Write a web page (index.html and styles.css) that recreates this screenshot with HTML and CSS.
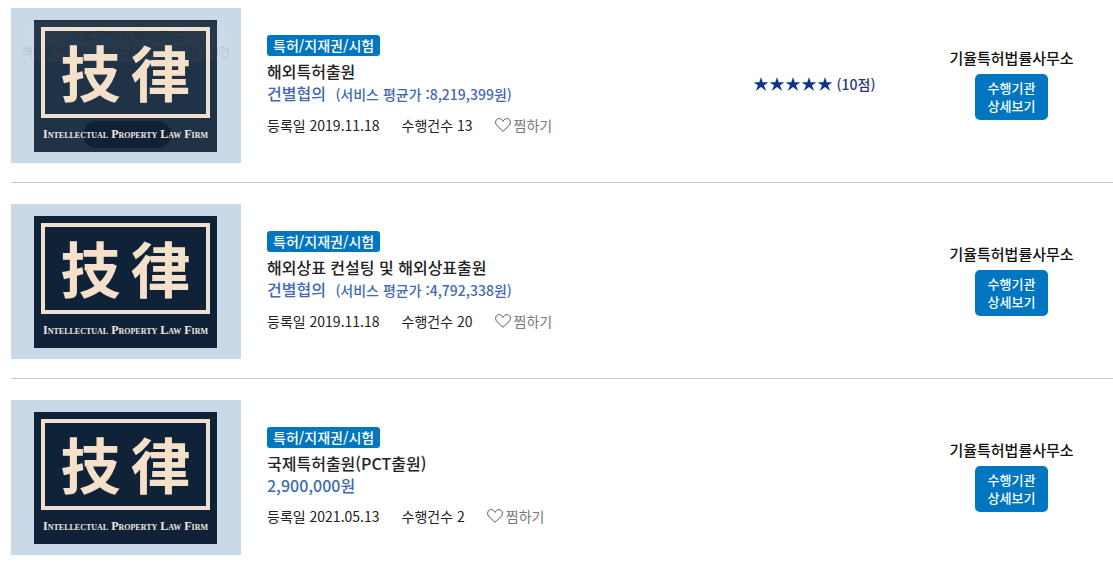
FILE: index.html
```html
<!DOCTYPE html>
<html lang="ko">
<head>
    <meta charset="UTF-8">
    <meta name="viewport" content="width=device-width, initial-scale=1.0">
    <title>특허/지재권/시험 서비스</title>
    <link rel="stylesheet" href="styles.css">
</head>
<body>

    <!-- Shared icons -->
    <svg class="icon-defs" aria-hidden="true">
        <symbol id="star" viewBox="0 0 16 16">
            <path d="M8 1 L9.7 6.2 L15.2 6.2 L11 9.6 L13.2 15 L8 11 L2.8 15 L5 9.6 L0.8 6.2 L6.3 6.2 Z"/>
        </symbol>
        <symbol id="heart" viewBox="0 0 16 14">
            <path d="M8 13.3 L2 7.6 C0.2 5.8 0.1 3 1.8 1.5 C3.8 -0.2 6.8 0.6 8 3.4 C9.2 0.6 12.2 -0.2 14.2 1.5 C15.9 3 15.8 5.8 14 7.6 Z"/>
        </symbol>
    </svg>

    <ul class="service-list">
        <li class="service">
            <div class="thumb">
                <div class="plate plate-hover">
                    <div class="plate-frame"><span>技</span><span>律</span></div>
                    <div class="plate-caption">Intellectual Property Law Firm</div>
                </div>
                <div class="thumb-overlay">
                    <span>기율특허법률사무소</span>
                    <span>해외특허출원 서비스 한번에 이전하기 8건</span>
                </div>
                <div class="thumb-pill"></div>
            </div>
            <div class="info">
                <span class="badge">특허/지재권/시험</span>
                <h3>해외특허출원</h3>
                <p class="price">건별협의 <small>(서비스 평균가 :8,219,399원)</small></p>
                <div class="meta">
                    <span>등록일 2019.11.18</span>
                    <span>수행건수 13</span>
                    <button class="like-btn"><svg><use href="#heart"/></svg>찜하기</button>
                </div>
            </div>
            <div class="rating">
                <span class="stars"><svg><use href="#star"/></svg><svg><use href="#star"/></svg><svg><use href="#star"/></svg><svg><use href="#star"/></svg><svg><use href="#star"/></svg></span>
                <span>(10점)</span>
            </div>
            <div class="firm">
                <strong>기율특허법률사무소</strong>
                <button class="detail-btn">수행기관<br>상세보기</button>
            </div>
        </li>

        <li class="service">
            <div class="thumb">
                <div class="plate">
                    <div class="plate-frame"><span>技</span><span>律</span></div>
                    <div class="plate-caption">Intellectual Property Law Firm</div>
                </div>
            </div>
            <div class="info">
                <span class="badge">특허/지재권/시험</span>
                <h3>해외상표 컨설팅 및 해외상표출원</h3>
                <p class="price">건별협의 <small>(서비스 평균가 :4,792,338원)</small></p>
                <div class="meta">
                    <span>등록일 2019.11.18</span>
                    <span>수행건수 20</span>
                    <button class="like-btn"><svg><use href="#heart"/></svg>찜하기</button>
                </div>
            </div>
            <div class="rating"></div>
            <div class="firm">
                <strong>기율특허법률사무소</strong>
                <button class="detail-btn">수행기관<br>상세보기</button>
            </div>
        </li>

        <li class="service">
            <div class="thumb">
                <div class="plate">
                    <div class="plate-frame"><span>技</span><span>律</span></div>
                    <div class="plate-caption">Intellectual Property Law Firm</div>
                </div>
            </div>
            <div class="info">
                <span class="badge">특허/지재권/시험</span>
                <h3>국제특허출원(PCT출원)</h3>
                <p class="price">2,900,000원</p>
                <div class="meta">
                    <span>등록일 2021.05.13</span>
                    <span>수행건수 2</span>
                    <button class="like-btn"><svg><use href="#heart"/></svg>찜하기</button>
                </div>
            </div>
            <div class="rating"></div>
            <div class="firm">
                <strong>기율특허법률사무소</strong>
                <button class="detail-btn">수행기관<br>상세보기</button>
            </div>
        </li>
    </ul>

</body>
</html>
```
FILE: styles.css
```css
body { font-family: "Noto Sans CJK KR", sans-serif; font-size: 14px; color: #222; background: white; margin: 0; }
button { font-family: inherit; border: none; cursor: pointer; }
.icon-defs { display: none; }

.service-list { list-style: none; margin: 0; padding: 8px 0 0 11px; }
.service {
    display: grid; grid-template-columns: 230px 1fr 192px 203px; align-items: center;
    padding-bottom: 19px; margin-bottom: 21px; border-bottom: 1px solid #ccc;
}
.service:last-child { padding-bottom: 0; margin-bottom: 0; border-bottom: none; }

/* Thumbnail */
.thumb {
    position: relative; box-sizing: border-box; height: 155px;
    padding: 12px 24px 11px 23px; background: #c9d9e8;
}
.plate {
    box-sizing: border-box; height: 132px; padding: 7px 7px 0;
    background: #0f2238; text-align: center;
}
.plate-hover { background: #203246; }
.plate-frame, .plate-caption { position: relative; z-index: 1; }
.plate-frame {
    display: flex; justify-content: center; gap: 10px;
    border: 4px solid #f0e0d0; height: 83px; line-height: 80px; color: #f5e0ca;
    font-family: "Noto Sans CJK TC", sans-serif; font-size: 60px; font-weight: 700;
}
.plate-caption {
    font-family: "Liberation Serif", serif; font-size: 12px; font-weight: bold;
    font-variant: small-caps; line-height: 32px; color: #f0e8e0; white-space: nowrap;
}
.thumb-overlay {
    position: absolute; top: 14px; left: 10px; right: 10px;
    display: flex; flex-direction: column; align-items: center;
    border-radius: 24px; background: rgba(255, 255, 255, 0.03);
    color: rgba(0, 0, 0, 0.12); line-height: 20px; white-space: nowrap;
}
.thumb-overlay span:last-child { font-size: 12px; }
.thumb-pill {
    position: absolute; left: 72px; bottom: 15px; width: 88px; height: 27px;
    border-radius: 14px; background: rgba(0, 16, 36, 0.5);
}

/* Service info */
.info { padding: 0 0 2px 26px; }
.badge {
    display: block; width: fit-content; padding: 0 6px; line-height: 21px;
    font-weight: 500; color: white; background: #0076c0; border-radius: 3px;
}
.info h3 { margin: 4px 0 0; font-size: 16px; font-weight: 500; line-height: 22px; }
.price { margin: 0; font-size: 16px; font-weight: 500; line-height: 22px; color: #4169b0; }
.price small { font-size: 14px; margin-left: 5px; }
.meta { display: flex; gap: 22px; margin-top: 10px; line-height: 20px; }
.like-btn {
    display: flex; align-items: center; gap: 3px; padding: 0;
    background: none; font-size: 14px; line-height: 20px; color: #777;
}
.like-btn svg { width: 16px; height: 14px; fill: none; stroke: #555; }

/* Rating */
.rating {
    display: flex; justify-content: center; align-items: center; gap: 4px;
    padding-bottom: 3px; font-weight: 500; color: #26387c;
}
.stars { display: flex; }
.stars svg { width: 16px; height: 16px; fill: #10348c; }

/* Firm */
.firm { display: flex; flex-direction: column; align-items: center; gap: 4px; padding-bottom: 5px; }
.firm strong { font-size: 15px; font-weight: 500; line-height: 24px; color: #111; }
.detail-btn {
    padding: 5px 13px; font-size: 13px; font-weight: 500; line-height: 18px;
    color: white; background: #0076c0; border-radius: 5px;
}
```
